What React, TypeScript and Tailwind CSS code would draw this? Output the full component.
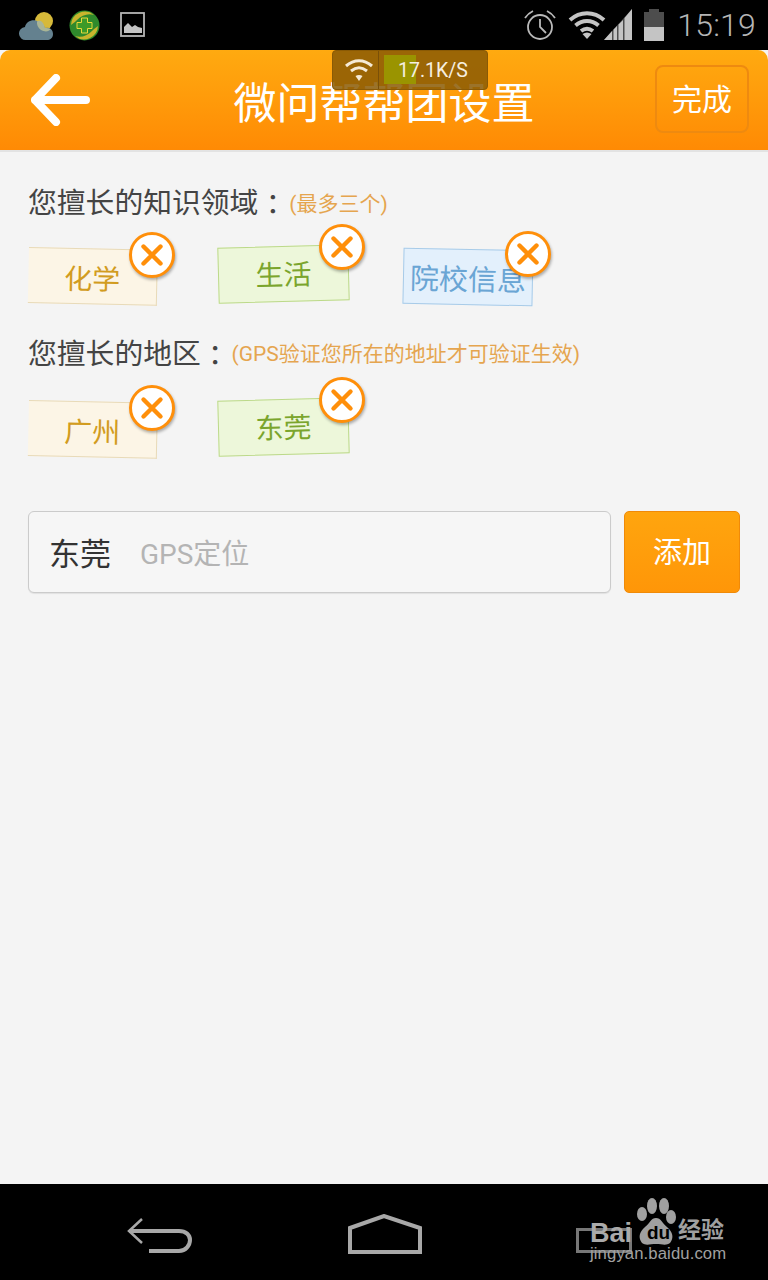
import React from "react";

const FONT = "font-['Roboto','Noto_Sans_CJK_SC',sans-serif]";

const CloseBadge: React.FC<{ className: string }> = ({ className }) => (
  <span
    className={`absolute flex h-[46px] w-[46px] items-center justify-center rounded-full border-[3px] border-[#ff8f0a] bg-white shadow-[1px_2px_3px_rgba(0,0,0,0.3)] ${className}`}
  >
    <svg width="24" height="24" viewBox="0 0 24 24" fill="none" stroke="#ff8f0a" strokeWidth="4.4" strokeLinecap="round">
      <path d="M3.5 3.5 20.5 20.5M20.5 3.5 3.5 20.5" />
    </svg>
  </span>
);

type TagProps = {
  label: string;
  box: string;
  text: string;
  badge: string;
};

const Tag: React.FC<TagProps> = ({ label, box, text, badge }) => (
  <div className="relative">
    <div className={`flex items-center justify-center ${box}`}>
      <span className={`whitespace-nowrap ${text}`}>{label}</span>
    </div>
    <CloseBadge className={badge} />
  </div>
);

const yellowBox =
  "h-[56px] w-[129px] pt-[8px] rotate-[1.2deg] origin-top-left border-y border-r border-y-[#e8dab8] border-r-[#e8dab8] bg-[#fcf5e6]";
const greenBox =
  "h-[56px] w-[131px] pt-[3px] -rotate-[1.5deg] border border-[#bcd98a] bg-[#edf7da]";
const blueBox =
  "h-[56px] w-[130px] pt-[8px] rotate-[1.2deg] border border-[#a8cbe8] bg-[#e3f0fc]";

const StatusBar: React.FC = () => (
  <div className="flex h-[50px] items-center bg-black pl-[19px] pr-[12px]">
    <svg width="35" height="30" viewBox="0 0 35 30" className="mt-[1px]">
      <circle cx="25" cy="10" r="9" fill="#d6b93a" />
      <path d="M7 29a6.500 6.500 0 0 1-1-13c1-6 9-9 14-5 3 1 5 3 6 6 5-1 8 2 8 6s-3 6-6 6z" fill="#64818f" />
      <path d="M18 10.500c1.500-1.500 6-2 8 6.500 2 0 4 0 5.500 1-1 2-4 3-7 2-4-1-7-5-6.500-9.500z" fill="#a9b596" />
    </svg>
    <svg width="31" height="31" viewBox="0 0 31 31" className="ml-[15px]">
      <circle cx="15.500" cy="15.500" r="15" fill="#2f8a2c" />
      <path d="M2 15a14 14 0 0 1 23-10c-6-2-12 0-17 5-3 3-5 4-6 5z" fill="#c9b52d" />
      <path d="M29 16a14 14 0 0 1-23 10c6 2 12 0 17-5 3-3 5-4 6-5z" fill="#c9b52d" />
      <path d="M12.500 8h6v4.500H23v6h-4.500V23h-6v-4.500H8v-6h4.500z" fill="#3d9a28" stroke="#e9d83a" strokeWidth="1" />
    </svg>
    <svg width="26" height="26" viewBox="0 0 26 26" className="ml-[20px]">
      <rect x="1" y="1" width="23" height="23" fill="none" stroke="#b5b5b5" strokeWidth="1.800" />
      <path d="M4 21v-6l4-4 4 4 3-2 3 2 4 1v5z" fill="#c4c4c4" />
    </svg>
    <div className="ml-auto flex items-center">
      <svg width="34" height="34" viewBox="0 0 34 34" fill="none" stroke="#b9b9b9" strokeWidth="1.800">
        <circle cx="17" cy="19" r="12" />
        <path d="M17 11v8l6 6M2 10c2-3 4-5 8-7M32 10c-2-3-4-5-8-7" />
      </svg>
      <svg width="38" height="30" viewBox="0 0 38 30" className="ml-[11px]" fill="none" stroke="#c4c4c4" strokeWidth="4">
        <path d="M2 10c10-9 24-9 34 0M7.500 15.500c7-6 16-6 23 0M13 21c4-3 8-3 12 0" />
        <path d="M14.500 24 19 29l4.500-5c-3-2-6-2-9 0z" fill="#c4c4c4" stroke="none" />
      </svg>
      <svg width="28" height="32" viewBox="0 0 28 32" className="ml-[-2px]">
        <path d="M28 0v31H0z" fill="#4d4d4d" />
        <path d="M8 22v9H0zM13 17v14H9.500V20.500zM19 11v20h-4.500V15.500zM28 0v31h-7.500V9z" fill="#c4c4c4" />
      </svg>
      <div className="ml-[12px] flex h-[32px] w-[20px] flex-col">
        <div className="mx-auto h-[3px] w-[10px] bg-[#4d4d4d]" />
        <div className="h-[15px] bg-[#4d4d4d]" />
        <div className="h-[14px] bg-[#c4c4c4]" />
      </div>
      <span className="ml-[13px] font-['Roboto',sans-serif] text-[32px] leading-none font-light tracking-[0.2px] text-[#b5b5b5]">
        15:19
      </span>
    </div>
  </div>
);

const NetSpeed: React.FC = () => (
  <div className="absolute left-[332px] top-[50px] flex h-[40px] w-[156px] rounded-[4px] border border-[#8a5a05] bg-[#8a5a05]/85">
    <svg width="30" height="26" viewBox="0 0 30 26" className="ml-[11px] mt-[6px]" fill="none" stroke="#f5ead6" strokeWidth="3">
      <path d="M2 9c8-7 18-7 26 0M7 14c5-4 11-4 16 0" />
      <path d="M11.500 19c2-1.500 5-1.500 7 0L15 24z" fill="#f5ead6" stroke="none" />
    </svg>
    <div className="ml-[4px] w-px bg-[#7a5008]" />
    <div className="relative ml-[5px] mt-[4px] h-[29px] w-[32px] bg-[#9a9400]" />
    <span className="absolute left-[65px] top-[9px] font-['Roboto',sans-serif] text-[19.500px] leading-[22px] text-[#f6efe0]">
      17.1K/S
    </span>
  </div>
);

const Header: React.FC = () => (
  <div className="relative flex h-[102px] items-center justify-center rounded-t-[10px] border-b-2 border-[#e3e3e3] bg-gradient-to-b from-[#ffaa10] to-[#ff8a04] pt-[8px]">
    <svg width="60" height="52" viewBox="0 0 60 52" className="absolute left-[31px] top-[24px]" fill="none" stroke="#fff" strokeWidth="8" strokeLinecap="round" strokeLinejoin="round">
      <path d="M25 4 4 26l21 22M4 26h51" />
    </svg>
    <span className="text-[43px] leading-none text-white">微问帮帮团设置</span>
    <div className="absolute left-[655px] top-[15px] flex h-[68px] w-[94px] items-center justify-center rounded-[8px] border-2 border-[#ee8a10] pt-[1px] text-[30px] text-white">
      完成
    </div>
  </div>
);

const Nav: React.FC = () => (
  <div className="relative mt-auto flex h-[96px] bg-black">
    <svg width="68" height="38" viewBox="0 0 68 38" className="absolute left-[126px] top-[33px]" fill="none" stroke="#a8a8a8" strokeWidth="3">
      <path d="M16 2 3 14l13 12" strokeWidth="2.500" />
      <path d="M3 14h50c7 0 11 4 11 9s-4 11-11 11H23" strokeWidth="4" />
    </svg>
    <svg width="74" height="40" viewBox="0 0 74 40" className="absolute left-[348px] top-[30px]" fill="none" stroke="#a8a8a8" strokeWidth="4">
      <path d="M2 14 36 2l36 12v24H2z" />
    </svg>
    <div className="absolute left-[576px] top-[44px] h-[25px] w-[56px] border-[3px] border-[#777]" />
    <svg width="42" height="50" viewBox="0 0 42 50" className="absolute left-[635px] top-[14px]" fill="#a0a0a0">
      <ellipse cx="7" cy="16" rx="5" ry="7" />
      <ellipse cx="17" cy="8" rx="5" ry="8" />
      <ellipse cx="29" cy="8" rx="5" ry="8" />
      <ellipse cx="36" cy="19" rx="5" ry="7" />
      <path d="M21 20c5 0 6 5 11 9 6 5 7 11 3 16-4 3-8 1-14 1s-10 2-14-1c-4-5-3-11 3-16 5-4 6-9 11-9z" />
    </svg>
    <span className="absolute left-[590px] top-[34px] font-['Liberation_Sans',sans-serif] text-[27px] leading-[30px] font-bold text-[#aaaaaa]">
      Bai
    </span>
    <span className="absolute left-[647px] top-[38px] font-['Liberation_Sans',sans-serif] text-[19px] leading-[22px] font-bold text-black">
      du
    </span>
    <span className="absolute left-[678px] top-[32px] text-[23px] leading-[30px] font-bold text-[#a0a0a0]">经验</span>
    <span className="absolute left-[590px] top-[60px] font-['Liberation_Sans',sans-serif] text-[16.700px] leading-[20px] tracking-[0.1px] text-[#a0a0a0]">
      jingyan.baidu.com
    </span>
  </div>
);

const App: React.FC = () => {
  return (
    <div className={`relative flex h-[1280px] w-[768px] flex-col overflow-hidden bg-black ${FONT}`}>
      <StatusBar />
      <div className="flex flex-1 flex-col bg-[#f4f4f4]">
        <Header />
        <main className="pl-[28px] pr-[28px]">
          <div className="mt-[31px] flex h-[40px] items-center text-[#444]">
            <span className="whitespace-nowrap text-[28.800px] leading-none">您擅长的知识领域</span>
            <span className="whitespace-nowrap font-['Noto_Sans_CJK_TC',sans-serif] text-[28.800px] leading-none">：</span>
            <span className="ml-[2px] mt-[2px] whitespace-nowrap text-[21px] leading-none text-[#e5a54f]">(最多三个)</span>
          </div>
          <div className="ml-[1px] mt-[24px] flex h-[60px] items-start">
            <Tag label="化学" box={yellowBox} text="text-[28px] text-[#d29c1f]" badge="left-[100px] top-[-15px]" />
            <div className="ml-[60px] mt-[-1px]">
              <Tag label="生活" box={greenBox} text="text-[28px] text-[#7ba52d]" badge="left-[101px] top-[-22px]" />
            </div>
            <div className="ml-[54px] mt-[2px]">
              <Tag label="院校信息" box={blueBox} text="text-[29px] text-[#6aa5d4]" badge="left-[102px] top-[-18px]" />
            </div>
          </div>
          <div className="mt-[27px] flex h-[40px] items-center text-[#444]">
            <span className="whitespace-nowrap text-[28.800px] leading-none">您擅长的地区</span>
            <span className="whitespace-nowrap font-['Noto_Sans_CJK_TC',sans-serif] text-[28.800px] leading-none">：</span>
            <span className="ml-[2px] mt-[1px] whitespace-nowrap text-[21px] leading-none text-[#e5a54f]">(GPS验证您所在的地址才可验证生效)</span>
          </div>
          <div className="ml-[1px] mt-[26px] flex h-[60px] items-start">
            <Tag label="广州" box={yellowBox} text="text-[28px] text-[#d29c1f]" badge="left-[100px] top-[-15px]" />
            <div className="ml-[60px] mt-[-1px]">
              <Tag label="东莞" box={greenBox} text="text-[28px] text-[#7ba52d]" badge="left-[101px] top-[-22px]" />
            </div>
          </div>
          <div className="mt-[51px] flex h-[82px] gap-[13px]">
            <div className="flex w-[583px] items-center rounded-[6px] border border-[#cbcbcb] bg-[#f6f6f6] pl-[20px] pt-[5px] shadow-[0_1px_1px_rgba(0,0,0,0.08)]">
              <span className="text-[31px] leading-none text-[#333]">东莞</span>
              <span className="ml-[29px] text-[28px] leading-none text-[#b4b4b4]">GPS定位</span>
            </div>
            <div className="flex w-[116px] items-center justify-center rounded-[5px] border border-[#f08a08] bg-gradient-to-b from-[#ffa50e] to-[#ff9608] pt-[4px] text-[29px] text-white">
              添加
            </div>
          </div>
        </main>
        <Nav />
      </div>
      <NetSpeed />
    </div>
  );
};

export default App;
